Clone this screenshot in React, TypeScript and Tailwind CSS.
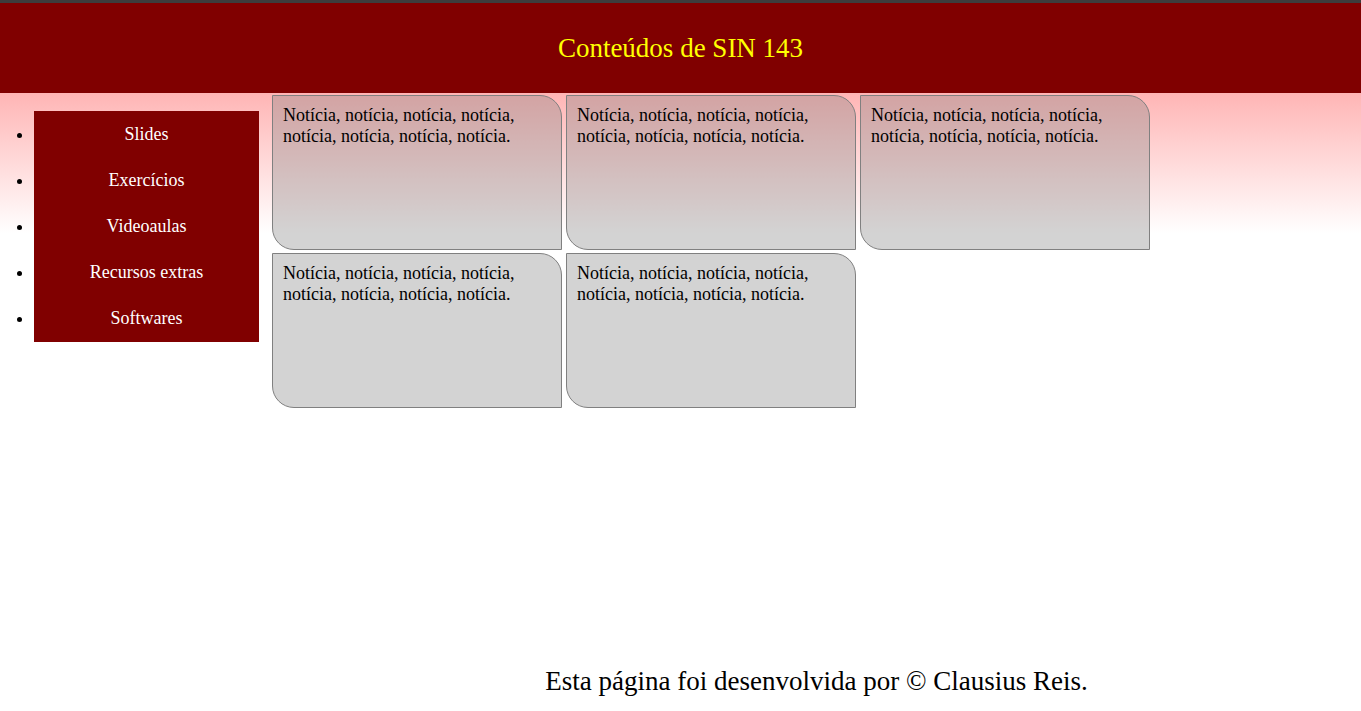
import React from 'react';

const menu = ['Slides', 'Exercícios', 'Videoaulas', 'Recursos extras', 'Softwares'];
const news = Array.from({ length: 5 }, (_, i) => i);

export default function App() {
  return (
    <div className="min-h-screen bg-white font-['Liberation_Serif','Times_New_Roman',serif] text-black">
      <div className="h-[3px] bg-[#3d3d3d]" />
      <header className="h-[90px] bg-[#800000] flex items-center justify-center">
        <h1 className="text-[27px] text-[#ffff00]">Conteúdos de SIN 143</h1>
      </header>

      <div className="flex bg-[linear-gradient(to_bottom,#ffb5b5_0px,#ffffff_140px)]">
        {/* Menu lateral */}
        <nav className="w-[272px] shrink-0">
          <ul className="list-disc marker:text-black mt-[18px] pl-[34px] pr-[13px] text-[18px]">
            {menu.map((item) => (
              <li key={item} className="h-[46px] last:h-[47px] bg-[#800000] text-white">
                <div className="h-[46px] flex items-center justify-center">{item}</div>
              </li>
            ))}
          </ul>
        </nav>

        {/* Notícias */}
        <main className="flex-1">
          <div className="flex flex-wrap gap-x-[4px] gap-y-[3px] pt-[2px]">
            {news.map((n) => (
              <div
                key={n}
                className="w-[290px] h-[155px] border border-[#808080] rounded-tr-[22px] rounded-bl-[22px] bg-[#80808059] px-[10px] py-[9px] text-[18px] leading-[21px]"
              >
                Notícia, notícia, notícia, notícia, notícia, notícia, notícia, notícia.
              </div>
            ))}
          </div>
          <footer className="mt-[258px] text-center text-[27px] leading-[31px]">
            Esta página foi desenvolvida por © Clausius Reis.
          </footer>
        </main>
      </div>
    </div>
  );
}
